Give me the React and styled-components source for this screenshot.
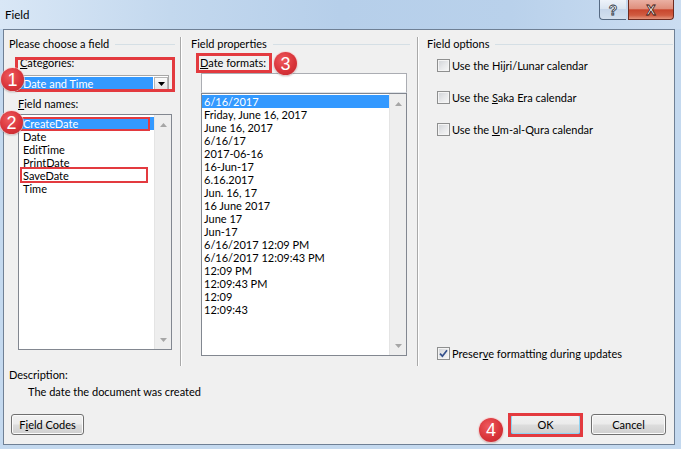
import React from "react";
import styled, { createGlobalStyle } from "styled-components";

const GlobalStyle = createGlobalStyle`
  html, body { margin: 0; padding: 0; background: #fff; }
  body { font-family: Lato, "Noto Sans", sans-serif; font-size: 11px; color: #000; }
  #root { width: 681px; height: 449px; }
  * { box-sizing: border-box; }
`;

const Window = styled.div`
  width: 681px;
  height: 449px;
  display: flex;
  flex-direction: column;
  background: #c4d9ef;
  overflow: hidden;
`;

const TitleBar = styled.div`
  height: 29px;
  flex: none;
  display: flex;
  justify-content: space-between;
  align-items: flex-start;
  background: linear-gradient(90deg, #d9e7f6 0%, #c3d8ee 25%, #b6cfea 50%, #b9d1eb 75%, #cbddf1 100%);
`;

const TitleText = styled.div`
  margin: 7px 0 0 5px;
  line-height: 16px;
  font-size: 11.5px;
`;

const CaptionButtons = styled.div`
  display: flex;
  gap: 2px;
  margin-right: 7px;
`;

const HelpButton = styled.div`
  width: 27px;
  height: 20px;
  border: 1px solid #566a83;
  border-top: none;
  border-right: none;
  border-radius: 0 0 0 4px;
  background: linear-gradient(#eef3fa 0%, #dbe5f1 45%, #c6d6ea 50%, #d3e0ef 100%);
  display: flex;
  align-items: center;
  justify-content: center;
  font-family: "Liberation Sans", sans-serif;
  font-weight: bold;
  font-size: 14px;
  color: #fff;
  -webkit-text-stroke: 0.8px #2c3644;
`;

const CloseButton = styled.div`
  width: 46px;
  height: 20px;
  border: 1px solid #6e2b20;
  border-top: none;
  border-radius: 0 0 4px 0;
  background: linear-gradient(#eab0a3 0%, #df8f7c 45%, #c8462d 52%, #d05b40 80%, #e4957d 100%);
  display: flex;
  align-items: center;
  justify-content: center;
  font-family: "Liberation Sans", sans-serif;
  font-weight: bold;
  font-size: 14px;
  color: #fff;
  -webkit-text-stroke: 0.8px #3a1510;
`;

const Frame = styled.div`
  flex: 1;
  display: flex;
  padding: 0 6px 4px 3px;
`;

const Client = styled.div`
  flex: 1;
  display: flex;
  flex-direction: column;
  background: #f0f0f0;
  border: 1px solid #6f8095;
`;

const Groups = styled.div`
  margin-top: 7px;
  height: 329px;
  display: grid;
  grid-template-columns: 176px 237px 1fr;
`;

const Column = styled.div`
  position: relative;
  display: flex;
  flex-direction: column;
  padding-left: ${(p) => p.$pad}px;
  border-left: ${(p) => (p.$line ? "1px solid #a9a9a9" : "none")};
  box-shadow: ${(p) => (p.$line ? "inset 1px 0 0 #ffffff" : "none")};
`;

const GroupHeader = styled.div`
  display: flex;
  align-items: center;
  height: 14px;
  line-height: 14px;
  white-space: nowrap;
`;

const Rule = styled.div`
  flex: 1;
  height: 1px;
  margin: 1px ${(p) => p.$end}px 0 6px;
  background: #d5dfe5;
`;

const Label = styled.div`
  height: 14px;
  line-height: 14px;
  margin-left: ${(p) => p.$ml || 0}px;
  margin-top: ${(p) => p.$mt || 0}px;
  white-space: nowrap;
`;

const Accel = styled.span`
  text-decoration: underline;
  text-underline-offset: 1px;
`;

const Annotated = styled.div`
  position: relative;
  margin-left: ${(p) => p.$ml || 0}px;
  margin-top: ${(p) => p.$mt || 0}px;
  align-self: flex-start;
`;

const RedFrame = styled.div`
  position: absolute;
  left: ${(p) => p.$l}px;
  top: ${(p) => p.$t}px;
  width: ${(p) => p.$w}px;
  height: ${(p) => p.$h}px;
  border: ${(p) => p.$b || 3}px solid #e33a3f;
  pointer-events: none;
  z-index: 2;
`;

const Badge = styled.div`
  position: absolute;
  left: ${(p) => p.$l}px;
  top: ${(p) => p.$t}px;
  width: ${(p) => p.$s || 23}px;
  height: ${(p) => p.$s || 23}px;
  border-radius: 50%;
  background: radial-gradient(circle at 40% 35%, #ef5b5e 0%, #d9343a 55%, #c0272d 100%);
  box-shadow: 0 0 0 1px rgba(255, 210, 210, 0.7), 0 1px 2px rgba(0, 0, 0, 0.35);
  color: #fff;
  font-family: "Liberation Sans", sans-serif;
  font-size: 18px;
  line-height: 1;
  display: flex;
  align-items: center;
  justify-content: center;
  z-index: 3;
`;

const Combo = styled.div`
  margin-top: 5px;
  width: 149px;
  height: 17px;
  display: flex;
  align-items: stretch;
  gap: 1px;
  padding: 1px 0;
  background: #fff;
  border: 1px solid #a7a7a7;
`;

const ComboValue = styled.div`
  flex: 1;
  background: #3399ff;
  color: #fff;
  line-height: 13px;
  padding-left: 2px;
  white-space: nowrap;
`;

const DropButton = styled.div`
  width: 14px;
  display: flex;
  align-items: center;
  justify-content: center;
  border: 1px solid #b5b5b5;
  background: linear-gradient(#fbfbfb, #e3e3e3);
`;

const ListBox = styled.div`
  margin-left: ${(p) => p.$ml || 0}px;
  margin-top: ${(p) => p.$mt || 0}px;
  width: ${(p) => p.$w}px;
  height: ${(p) => p.$h}px;
  border: 1px solid #828790;
  background: #fff;
  display: flex;
`;

const Items = styled.div`
  flex: 1;
  padding: ${(p) => p.$pt}px 0 0 ${(p) => p.$pl}px;
  display: flex;
  flex-direction: column;
`;

const Item = styled.div`
  position: relative;
  height: 13px;
  line-height: 13px;
  padding-left: 2px;
  white-space: nowrap;
  background: ${(p) => (p.$selected ? "#3399ff" : "transparent")};
  color: ${(p) => (p.$selected ? "#fff" : "#000")};
`;

const ScrollBar = styled.div`
  width: 17px;
  display: flex;
  flex-direction: column;
  justify-content: space-between;
  background: #eeeeee;
  border-left: 1px solid #e4e4e4;
`;

const ArrowBox = styled.div`
  height: 19px;
  display: flex;
  align-items: center;
  justify-content: center;
`;

const TextInput = styled.div`
  margin-left: 10px;
  margin-top: 3px;
  width: 206px;
  height: 20px;
  background: #fff;
  border: 1px solid #abadb3;
  border-bottom-color: #dfe3e8;
`;

const CheckRow = styled.div`
  display: flex;
  align-items: center;
  gap: 2px;
  height: 14px;
  margin-left: 10px;
  margin-top: ${(p) => p.$mt}px;
  margin-bottom: ${(p) => p.$mb || 0}px;
  white-space: nowrap;
`;

const CheckBox = styled.div`
  width: 13px;
  height: 13px;
  flex: none;
  border: 1px solid #8e8f8f;
  background: linear-gradient(135deg, #cfd2d6 0%, #e6e7e9 50%, #f8f8f8 100%);
  box-shadow: inset 0 0 0 1px #f4f4f4;
  display: flex;
  align-items: center;
  justify-content: center;
`;

const Description = styled.div`
  margin: ${(p) => p.$mt}px 0 0 ${(p) => p.$ml}px;
  height: 14px;
  line-height: 14px;
`;

const ButtonRow = styled.div`
  margin-top: 15px;
  height: 21px;
  display: flex;
  align-items: stretch;
  padding: 0 8px 0 7px;
`;

const Spacer = styled.div`
  flex: 1;
`;

const Button = styled.div`
  position: relative;
  width: ${(p) => p.$w}px;
  margin-left: ${(p) => p.$ml || 0}px;
  border: 1px solid ${(p) => (p.$default ? "#3c7fb1" : "#707070")};
  border-radius: 3px;
  background: linear-gradient(#f2f2f2 0%, #ebebeb 48%, #dddddd 52%, #cfcfcf 100%);
  box-shadow: inset 0 0 0 1px ${(p) => (p.$default ? "#8fd3f2" : "#fbfbfb")};
  display: flex;
  align-items: center;
  justify-content: center;
  line-height: 14px;
  white-space: nowrap;
`;

const UpArrow = () => (
  <svg width="7" height="4" viewBox="0 0 7 4">
    <polygon points="0,4 3.5,0 7,4" fill="#a6a6a6" />
  </svg>
);
const DownArrow = ({ color = "#a6a6a6" }) => (
  <svg width="7" height="4" viewBox="0 0 7 4">
    <polygon points="0,0 3.5,4 7,0" fill={color} />
  </svg>
);

const Scroll = () => (
  <ScrollBar>
    <ArrowBox>
      <UpArrow />
    </ArrowBox>
    <ArrowBox>
      <DownArrow />
    </ArrowBox>
  </ScrollBar>
);

const fieldNames = ["CreateDate", "Date", "EditTime", "PrintDate", "SaveDate", "Time"];
const dateFormats = [
  "6/16/2017",
  "Friday, June 16, 2017",
  "June 16, 2017",
  "6/16/17",
  "2017-06-16",
  "16-Jun-17",
  "6.16.2017",
  "Jun. 16, 17",
  "16 June 2017",
  "June 17",
  "Jun-17",
  "6/16/2017 12:09 PM",
  "6/16/2017 12:09:43 PM",
  "12:09 PM",
  "12:09:43 PM",
  "12:09",
  "12:09:43",
];

const Check = () => (
  <svg width="9" height="9" viewBox="0 0 9 9">
    <path d="M1 4.6 L3.4 7.2 L8 1.2" fill="none" stroke="#34508c" strokeWidth="1.7" />
  </svg>
);

export default function App() {
  return (
    <>
      <GlobalStyle />
      <Window>
        <TitleBar>
          <TitleText>Field</TitleText>
          <CaptionButtons>
            <HelpButton>?</HelpButton>
            <CloseButton>X</CloseButton>
          </CaptionButtons>
        </TitleBar>
        <Frame>
          <Client>
            <Groups>
              <Column $pad={5}>
                <GroupHeader>
                  Please choose a field
                  <Rule $end={5} />
                </GroupHeader>
                <Annotated $ml={11} $mt={5}>
                  <Label>
                    <Accel>C</Accel>ategories:
                  </Label>
                  <Combo>
                    <ComboValue>Date and Time</ComboValue>
                    <DropButton>
                      <DownArrow color="#000" />
                    </DropButton>
                  </Combo>
                  <RedFrame $l={-5} $t={1} $w={160} $h={35} />
                  <Badge $l={-19} $t={12}>1</Badge>
                </Annotated>
                <Label $ml={9} $mt={5}>
                  <Accel>F</Accel>ield names:
                </Label>
                <ListBox $ml={9} $mt={3} $w={154} $h={236}>
                  <Items $pt={2} $pl={2}>
                    {fieldNames.map((n, i) => (
                      <Item key={n} $selected={i === 0}>
                        {n}
                        {i === 0 && (
                          <>
                            <RedFrame $l={-1} $t={0} $w={130} $h={14} $b={2} />
                            <Badge $l={-21} $t={-6}>2</Badge>
                          </>
                        )}
                        {n === "SaveDate" && <RedFrame $l={-1} $t={-2} $w={128} $h={16} $b={2} />}
                      </Item>
                    ))}
                  </Items>
                  <Scroll />
                </ListBox>
              </Column>

              <Column $pad={10} $line>
                <GroupHeader>
                  Field properties
                  <Rule $end={7} />
                </GroupHeader>
                <Annotated $ml={9} $mt={5}>
                  <Label>
                    <Accel>D</Accel>ate formats:
                  </Label>
                  <RedFrame $l={-4} $t={-3} $w={76} $h={20} />
                  <Badge $l={74} $t={-4}>3</Badge>
                </Annotated>
                <TextInput />
                <ListBox $ml={10} $w={206} $h={263}>
                  <Items $pt={1} $pl={0}>
                    {dateFormats.map((d, i) => (
                      <Item key={d} $selected={i === 0}>
                        {d}
                      </Item>
                    ))}
                  </Items>
                  <Scroll />
                </ListBox>
              </Column>

              <Column $pad={9} $line>
                <GroupHeader>
                  Field options
                  <Rule $end={1} />
                </GroupHeader>
                <CheckRow $mt={7}>
                  <CheckBox />
                  <span>
                    Use the Hi<Accel>j</Accel>ri/Lunar calendar
                  </span>
                </CheckRow>
                <CheckRow $mt={18}>
                  <CheckBox />
                  <span>
                    Use the <Accel>S</Accel>aka Era calendar
                  </span>
                </CheckRow>
                <CheckRow $mt={18}>
                  <CheckBox />
                  <span>
                    Use the <Accel>U</Accel>m-al-Qura calendar
                  </span>
                </CheckRow>
                <Spacer />
                <CheckRow $mt={0} $mb={6}>
                  <CheckBox>
                    <Check />
                  </CheckBox>
                  <span>
                    Preser<Accel>v</Accel>e formatting during updates
                  </span>
                </CheckRow>
              </Column>
            </Groups>

            <Description $mt={2} $ml={5}>Description:</Description>
            <Description $mt={3} $ml={24}>The date the document was created</Description>

            <ButtonRow>
              <Button $w={73}>
                F<Accel>i</Accel>eld Codes
              </Button>
              <Spacer />
              <Button $w={71} $default>
                OK
                <RedFrame $l={-3} $t={-2} $w={75} $h={24} />
                <Badge $l={-32} $t={3} $s={24}>4</Badge>
              </Button>
              <Button $w={75} $ml={10}>
                Cancel
              </Button>
            </ButtonRow>
          </Client>
        </Frame>
      </Window>
    </>
  );
}
